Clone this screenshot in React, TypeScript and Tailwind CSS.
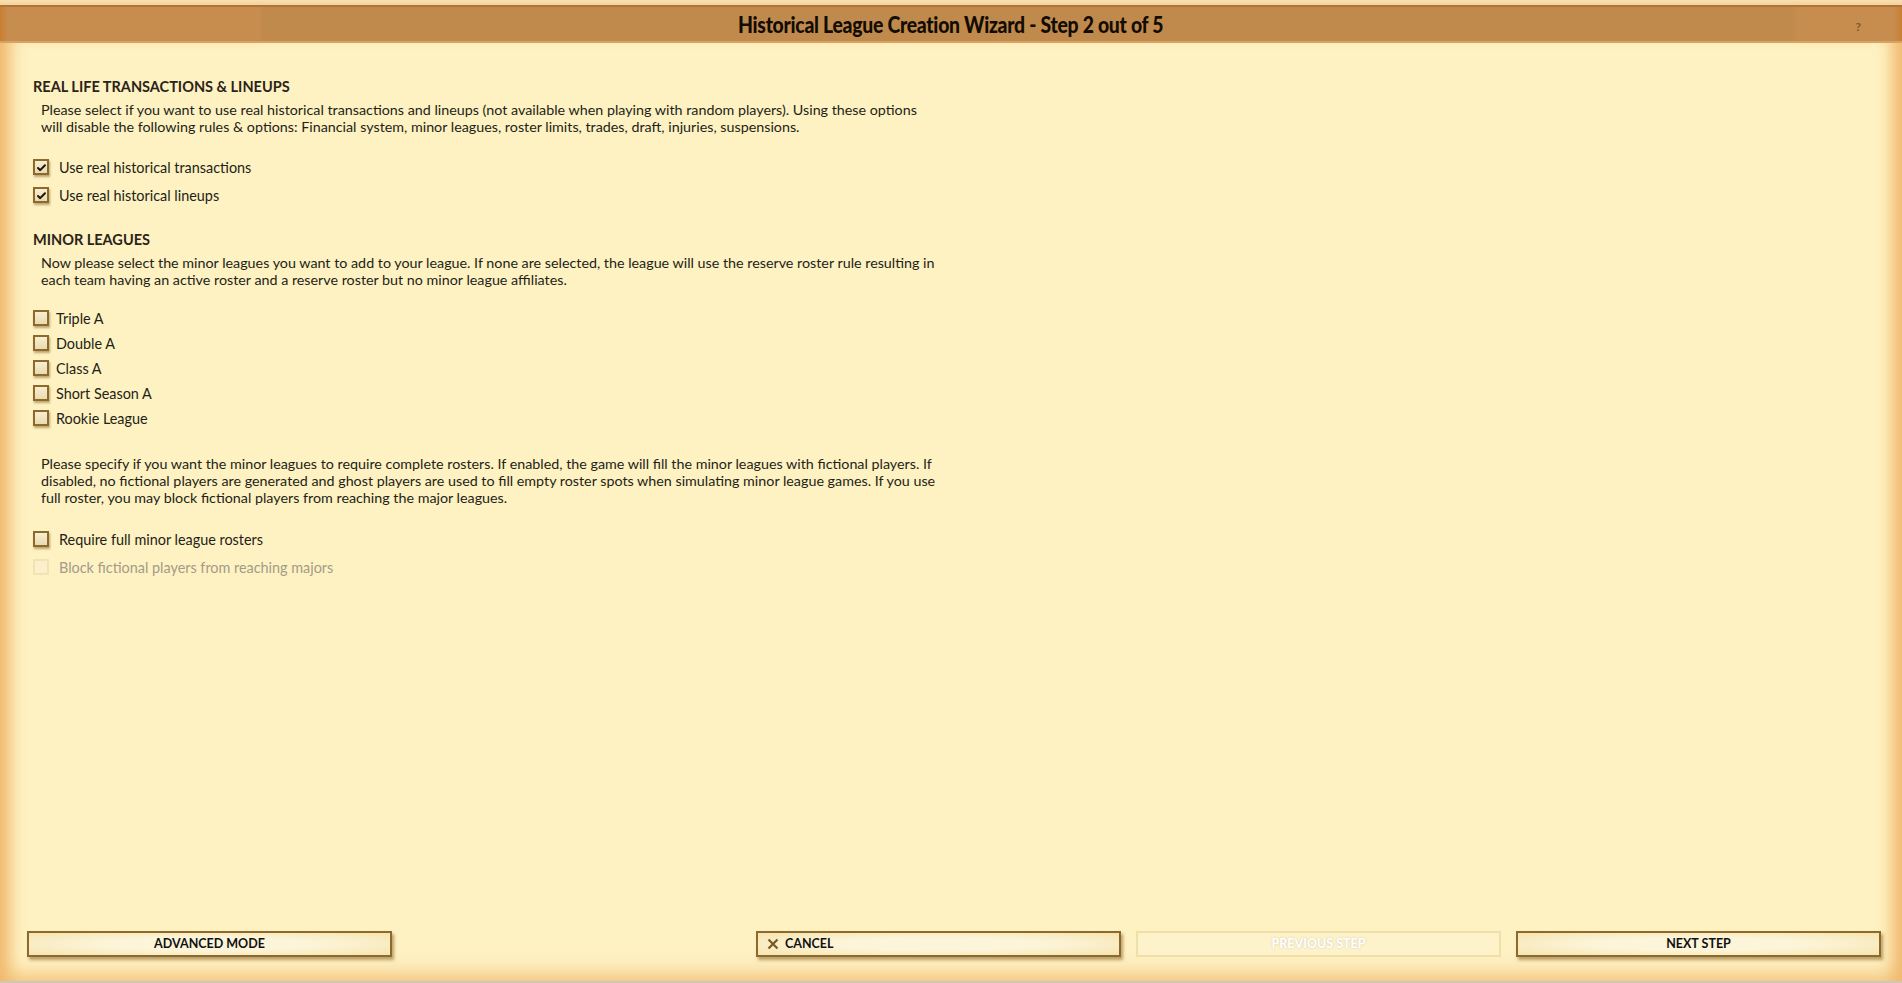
import React from "react";

function Box({ checked = false, disabled = false }: { checked?: boolean; disabled?: boolean }) {
  return (
    <span
      className={
        disabled
          ? "flex h-4 w-4 shrink-0 items-center justify-center border-2 border-[#f1e3b6] bg-[#fbf0cb]"
          : "flex h-4 w-4 shrink-0 items-center justify-center border-2 border-[#8d6a2c] bg-[linear-gradient(180deg,#f7eed2,#e9dab0)] shadow-[1px_2px_2px_rgba(110,75,20,0.45)]"
      }
    >
      {checked && (
        <svg viewBox="0 0 12 12" className="h-[11px] w-[11px]">
          <path d="M2.2 6.6 L4.6 8.9 L9.8 3.6" fill="none" stroke="#1b150c" strokeWidth="2.2" strokeLinecap="round" strokeLinejoin="round" />
        </svg>
      )}
    </span>
  );
}

function Row({ label, checked = false, disabled = false, gap = "gap-[10px]", h = "h-[22px]" }: { label: string; checked?: boolean; disabled?: boolean; gap?: string; h?: string }) {
  return (
    <div className={`flex items-center ${gap} ${h}`}>
      <Box checked={checked} disabled={disabled} />
      <span className={disabled ? "text-[14.4px] leading-[17px] text-[#a39c88]" : "text-[14.4px] leading-[17px] text-[#231f17]"}>{label}</span>
    </div>
  );
}

function Btn({ children, disabled = false, icon = false, left = false }: { children: React.ReactNode; disabled?: boolean; icon?: boolean; left?: boolean }) {
  return (
    <div
      className={
        disabled
          ? "flex h-[26px] w-[365px] items-center justify-center border-2 border-[#f0dfa8] bg-[#fdf2c9] text-[12.5px] font-bold text-white [text-shadow:0_0_2px_#cfc7b0]"
          : `flex h-[26px] w-[365px] items-center ${left ? "justify-start pl-[9px]" : "justify-center"} border-2 border-[#8d6a2c] bg-[radial-gradient(ellipse_at_center,#fdf5d9_40%,#f6e4ae_100%)] text-[12.5px] font-bold text-[#111] shadow-[2px_3px_3px_rgba(120,80,20,0.5)]`
      }
    >
      {icon && (
        <svg viewBox="0 0 12 12" className="mr-[6px] h-[12px] w-[12px]">
          <path d="M1.5 1.5 L10.5 10.5 M10.5 1.5 L1.5 10.5" stroke="#7a5a22" strokeWidth="2.3" />
        </svg>
      )}
      {children}
    </div>
  );
}

export default function App() {
  return (
    <div className="flex h-[983px] w-full flex-col bg-[#fef1c2] font-[Lato,Noto_Sans,sans-serif] text-[#231f17]">
      <div className="h-[5px] bg-[linear-gradient(180deg,#f9e0b2,#f4d19a)]" />
      <div className="relative flex h-[38px] items-center justify-center border-t-2 border-b-2 border-t-[#b0733a] border-b-[#d6a364] bg-[linear-gradient(90deg,#c97e30_0px,#c68d4e_8px,#c68d4f_260px,#c08a4c_262px,#c08a4c_1790px,#c68d4f_1800px,#c68d4e_1894px,#c97e30_1902px)]">
        <span className="inline-block origin-center scale-x-[0.88] text-[22px] font-black tracking-[-0.3px] text-[#120c05]">
          Historical League Creation Wizard - Step 2 out of 5
        </span>
        <span className="absolute right-[41px] top-[11px] text-[12px] font-bold text-[#7d5a26]">?</span>
      </div>
      <div className="flex flex-1 flex-col border-b-2 border-[#cfc8b8] pl-[27px] pr-[21px] pb-[24px] shadow-[inset_22px_0_16px_-12px_#f0b96c,inset_-22px_0_16px_-12px_#f0b96c,inset_0_-22px_18px_-14px_#f4c783]">
        <div className="flex flex-col pl-[6px]">
          <h2 className="mt-[34px] h-[20px] text-[14.5px] font-bold leading-[20px] text-[#2a2419]">REAL LIFE TRANSACTIONS &amp; LINEUPS</h2>
          <p className="mt-[4px] pl-[8px] text-[14.3px] leading-[17px]">
            Please select if you want to use real historical transactions and lineups (not available when playing with random players). Using these options
            <br />
            will disable the following rules &amp; options: Financial system, minor leagues, roster limits, trades, draft, injuries, suspensions.
          </p>
          <div className="mt-[21px] flex flex-col gap-[6px]">
            <Row label="Use real historical transactions" checked />
            <Row label="Use real historical lineups" checked />
          </div>
          <h2 className="mt-[24px] h-[20px] text-[14.5px] font-bold leading-[20px] text-[#2a2419]">MINOR LEAGUES</h2>
          <p className="mt-[4px] pl-[8px] text-[14.3px] leading-[17px]">
            Now please select the minor leagues you want to add to your league. If none are selected, the league will use the reserve roster rule resulting in
            <br />
            each team having an active roster and a reserve roster but no minor league affiliates.
          </p>
          <div className="mt-[20px] flex flex-col gap-[5px]">
            <Row label="Triple A" gap="gap-[7px]" h="h-[20px]" />
            <Row label="Double A" gap="gap-[7px]" h="h-[20px]" />
            <Row label="Class A" gap="gap-[7px]" h="h-[20px]" />
            <Row label="Short Season A" gap="gap-[7px]" h="h-[20px]" />
            <Row label="Rookie League" gap="gap-[7px]" h="h-[20px]" />
          </div>
          <p className="mt-[27px] pl-[8px] text-[14.3px] leading-[17px]">
            Please specify if you want the minor leagues to require complete rosters. If enabled, the game will fill the minor leagues with fictional players. If
            <br />
            disabled, no fictional players are generated and ghost players are used to fill empty roster spots when simulating minor league games. If you use
            <br />
            full roster, you may block fictional players from reaching the major leagues.
          </p>
          <div className="mt-[22px] flex flex-col gap-[6px]">
            <Row label="Require full minor league rosters" />
            <Row label="Block fictional players from reaching majors" disabled />
          </div>
        </div>
        <div className="mt-auto flex items-center">
          <Btn>ADVANCED MODE</Btn>
          <div className="flex-1" />
          <div className="flex gap-[15px]">
            <Btn icon left>CANCEL</Btn>
            <Btn disabled>PREVIOUS STEP</Btn>
            <Btn>NEXT STEP</Btn>
          </div>
        </div>
      </div>
    </div>
  );
}
